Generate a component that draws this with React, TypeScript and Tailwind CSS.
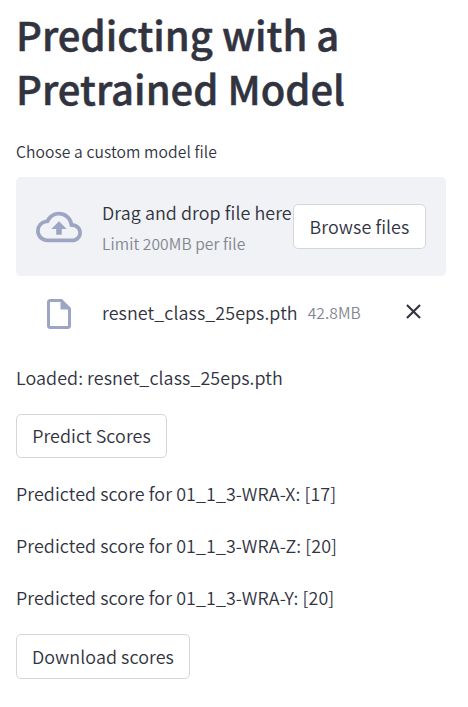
import type { ReactNode } from 'react';

const scores = [
  { name: '01_1_3-WRA-X', value: 17 },
  { name: '01_1_3-WRA-Z', value: 20 },
  { name: '01_1_3-WRA-Y', value: 20 },
];

function Button({ children, className }: { children: ReactNode; className: string }) {
  return (
    <button className={`flex shrink-0 items-center justify-center whitespace-nowrap rounded-[5px] border border-[#d6d6d9] bg-white pb-0.5 text-[17.9px] ${className}`}>
      {children}
    </button>
  );
}

function Icon({ d, className }: { d: string; className: string }) {
  return (
    <svg viewBox="0 0 24 24" fill="currentColor" className={className}>
      <path d={d} />
    </svg>
  );
}

export default function App() {
  return (
    <main className="min-h-[707px] bg-white pt-[7px] pr-[22px] pl-4 font-['Noto_Sans_CJK_SC','Noto_Sans_CJK_JP',sans-serif] text-[17.9px] leading-8 font-[350] tracking-[0.08px] text-[#31333f]">
      <h1 className="whitespace-nowrap text-[40px] leading-[54px] font-medium tracking-normal [-webkit-text-stroke:0.5px_#31333f]">
        Predicting with a<br />Pretrained Model
      </h1>
      <p className="mt-6 h-[38px] text-[15.65px] leading-[26px]">Choose a custom model file</p>
      <section className="flex h-[99px] items-center rounded-[5px] bg-[#f0f2f6] px-5">
        <Icon className="mr-[20px] size-[46px] shrink-0 text-[#9ca6c4]" d="M19.35 10.04A7.49 7.49 0 0 0 12 4C9.11 4 6.6 5.64 5.35 8.04A5.994 5.994 0 0 0 0 14c0 3.31 2.69 6 6 6h13c2.76 0 5-2.24 5-5 0-2.64-2.05-4.78-4.65-4.96zM19 18H6c-2.21 0-4-1.79-4-4 0-2.05 1.53-3.76 3.56-3.97l1.07-.11.5-.95A5.469 5.469 0 0 1 12 6c2.62 0 4.88 1.86 5.39 4.43l.3 1.5 1.53.11A2.98 2.98 0 0 1 22 15c0 1.65-1.35 3-3 3zM8 13h2.55v3h2.9v-3H16l-4-4z" />
        <div className="w-[191px] shrink-0 whitespace-nowrap pt-px">
          <div className="leading-[30px]">Drag and drop file here</div>
          <div className="mt-px text-[15.6px] leading-[30px] text-[#84868f]">Limit 200MB per file</div>
        </div>
        <Button className="h-[45px] w-[133px]">Browse files</Button>
      </section>
      <div className="flex h-[71px] items-center pr-5 pl-[25px]">
        <Icon className="mt-1 mr-[25px] size-9 shrink-0 text-[#9ca6c4]" d="M14 2H6c-1.1 0-1.99.9-1.99 2L4 20c0 1.1.89 2 1.99 2H18c1.1 0 2-.9 2-2V8l-6-6zM6 20V4h7v5h5v11H6z" />
        <span>resnet_class_25eps.pth</span>
        <span className="ml-2.5 text-[15.6px] text-[#84868f]">42.8MB</span>
        <Icon className="ml-auto size-[25px]" d="M19 6.41 17.59 5 12 10.59 6.41 5 5 6.41 10.59 12 5 17.59 6.41 19 12 13.41 17.59 19 19 17.59 13.41 12z" />
      </div>
      <div className="flex flex-col items-start gap-5 pt-[14px]">
        <p>Loaded: resnet_class_25eps.pth</p>
        <Button className="mt-px h-11 w-[151px]">Predict Scores</Button>
        {scores.map((s, i) => (
          <p key={s.name} className={i === 0 ? '-mt-px' : ''}>Predicted score for {s.name}: [{s.value}]</p>
        ))}
        <Button className="mt-px h-[45px] w-[174px]">Download scores</Button>
      </div>
    </main>
  );
}
